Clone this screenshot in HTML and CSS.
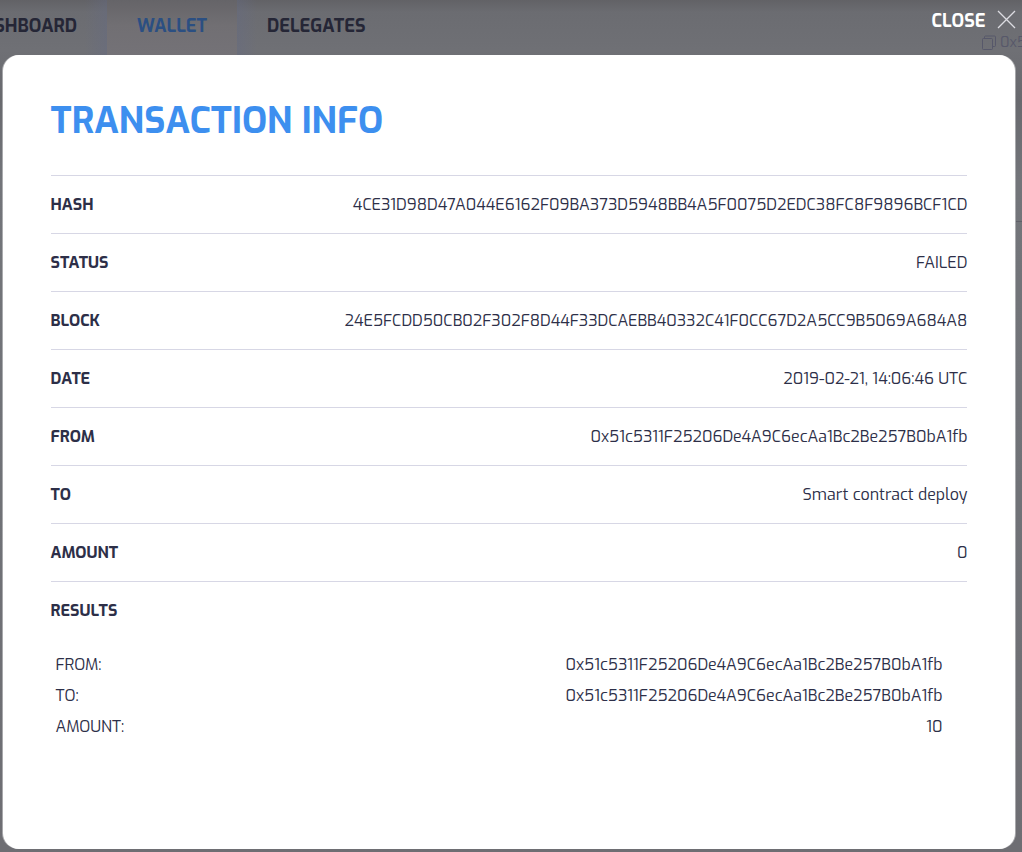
FILE: index.html
```html
<!DOCTYPE html>
<html lang="en">
<head>
<meta charset="utf-8">
<title>Transaction info</title>
<link rel="stylesheet" href="styles.css">
</head>
<body>
<div class="page">
  <nav class="nav">
    <span class="tab tab-dashboard">DASHBOARD</span>
    <span class="tab tab-active">WALLET</span>
    <span class="tab tab-delegates">DELEGATES</span>
  </nav>
  <div class="address">
    <svg width="15" height="15" viewBox="0 0 15 15" fill="none" stroke="currentColor"><rect x=".5" y="3.5" width="10" height="11" rx="1"/><path d="M2.500 3V2q0-1 1-1h9q1 0 1 1V10.500q0 1-1 1h-1.500"/></svg>
    <span>0x5</span>
  </div>
  <button class="close"><span>CLOSE</span>
    <svg width="19" height="19" viewBox="0 0 19 19" fill="none" stroke="#dcdce2" stroke-width="1.3"><path d="M1 1L18 18M18 1L1 18"/></svg>
  </button>
  <main class="modal">
    <h1 class="title">TRANSACTION INFO</h1>
    <dl class="rows">
      <div class="row"><dt>HASH</dt><dd>4CE31D98D47A044E6162F09BA373D5948BB4A5F0075D2EDC38FC8F9896BCF1CD</dd></div>
      <div class="row"><dt>STATUS</dt><dd>FAILED</dd></div>
      <div class="row"><dt>BLOCK</dt><dd>24E5FCDD50CB02F302F8D44F33DCAEBB40332C41F0CC67D2A5CC9B5069A684A8</dd></div>
      <div class="row"><dt>DATE</dt><dd>2019-02-21, 14:06:46 UTC</dd></div>
      <div class="row"><dt>FROM</dt><dd>0x51c5311F25206De4A9C6ecAa1Bc2Be257B0bA1fb</dd></div>
      <div class="row"><dt>TO</dt><dd>Smart contract deploy</dd></div>
      <div class="row"><dt>AMOUNT</dt><dd>0</dd></div>
      <div class="row"><dt>RESULTS</dt></div>
    </dl>
    <dl class="results">
      <div class="result"><dt>FROM:</dt><dd>0x51c5311F25206De4A9C6ecAa1Bc2Be257B0bA1fb</dd></div>
      <div class="result"><dt>TO:</dt><dd>0x51c5311F25206De4A9C6ecAa1Bc2Be257B0bA1fb</dd></div>
      <div class="result"><dt>AMOUNT:</dt><dd>10</dd></div>
    </dl>
  </main>
</div>
</body>
</html>
```
FILE: styles.css
```css
* { box-sizing: border-box; }
body { margin: 0; font-family: Exo, "Exo 2", Roboto, sans-serif; color: #2d2f48; }
.page {
  position: relative; width: 1022px; height: 852px; overflow: hidden;
  background:
    linear-gradient(#5f6068, #5f6068) 1016px 221px / 6px 1px no-repeat,
    linear-gradient(#626266 0, #6b6c71 12px, #6f7075 50px, #68696e 100px, #73757a 180px, #707277 500px, #6e6e73 852px);
}
.nav { display: flex; height: 55px; font-size: 18px; font-weight: 700; line-height: 53px; color: #252636; white-space: nowrap; }
.tab-dashboard { display: flex; justify-content: flex-end; width: 107px; padding-right: 30px; background: linear-gradient(90deg, transparent 85px, rgba(100, 106, 132, .4)); }
.tab-active { width: 130px; padding-left: 30px; color: #2b4f82; background: linear-gradient(#656468, #716f73 25px, #747277); }
.tab-delegates { width: 785px; padding-left: 30px; background: linear-gradient(90deg, rgba(100, 106, 132, .4), transparent 20px); }
.address { position: absolute; left: 982px; top: 34px; display: flex; align-items: center; gap: 3px; height: 16px; font-size: 14.5px; line-height: 18px; color: #57586a; }
.close { position: absolute; left: 931.5px; top: 8px; display: flex; align-items: center; justify-content: space-between; width: 84.5px; height: 24px; padding: 0; border: 0; background: none; color: #fff; font: 700 18px/24px Exo, "Exo 2", Roboto, sans-serif; }
.close span { padding-top: 2px; }
.close svg { margin-bottom: 2px; }
.modal { width: 1012px; height: 794px; margin-left: 3px; padding: 40px 47.6px 0 47.5px; border-radius: 16px; background: #fff; box-shadow: -1px 0 rgba(255, 255, 255, .4), 1px 0 rgba(255, 255, 255, .4); }
.title { margin: 0; height: 80px; font-size: 36px; line-height: 52px; font-weight: 700; color: #3d8fef; white-space: nowrap; }
.rows, .results { margin: 0; font-size: 16px; }
dt, dd { margin: 0; white-space: nowrap; }
.row { display: flex; justify-content: space-between; height: 58px; border-top: 1px solid #d7d7e5; line-height: 57px; }
.row dt { font-weight: 700; }
.results { padding: 10px 25px 0 5px; }
.result { display: flex; justify-content: space-between; height: 31px; line-height: 31px; }
```
